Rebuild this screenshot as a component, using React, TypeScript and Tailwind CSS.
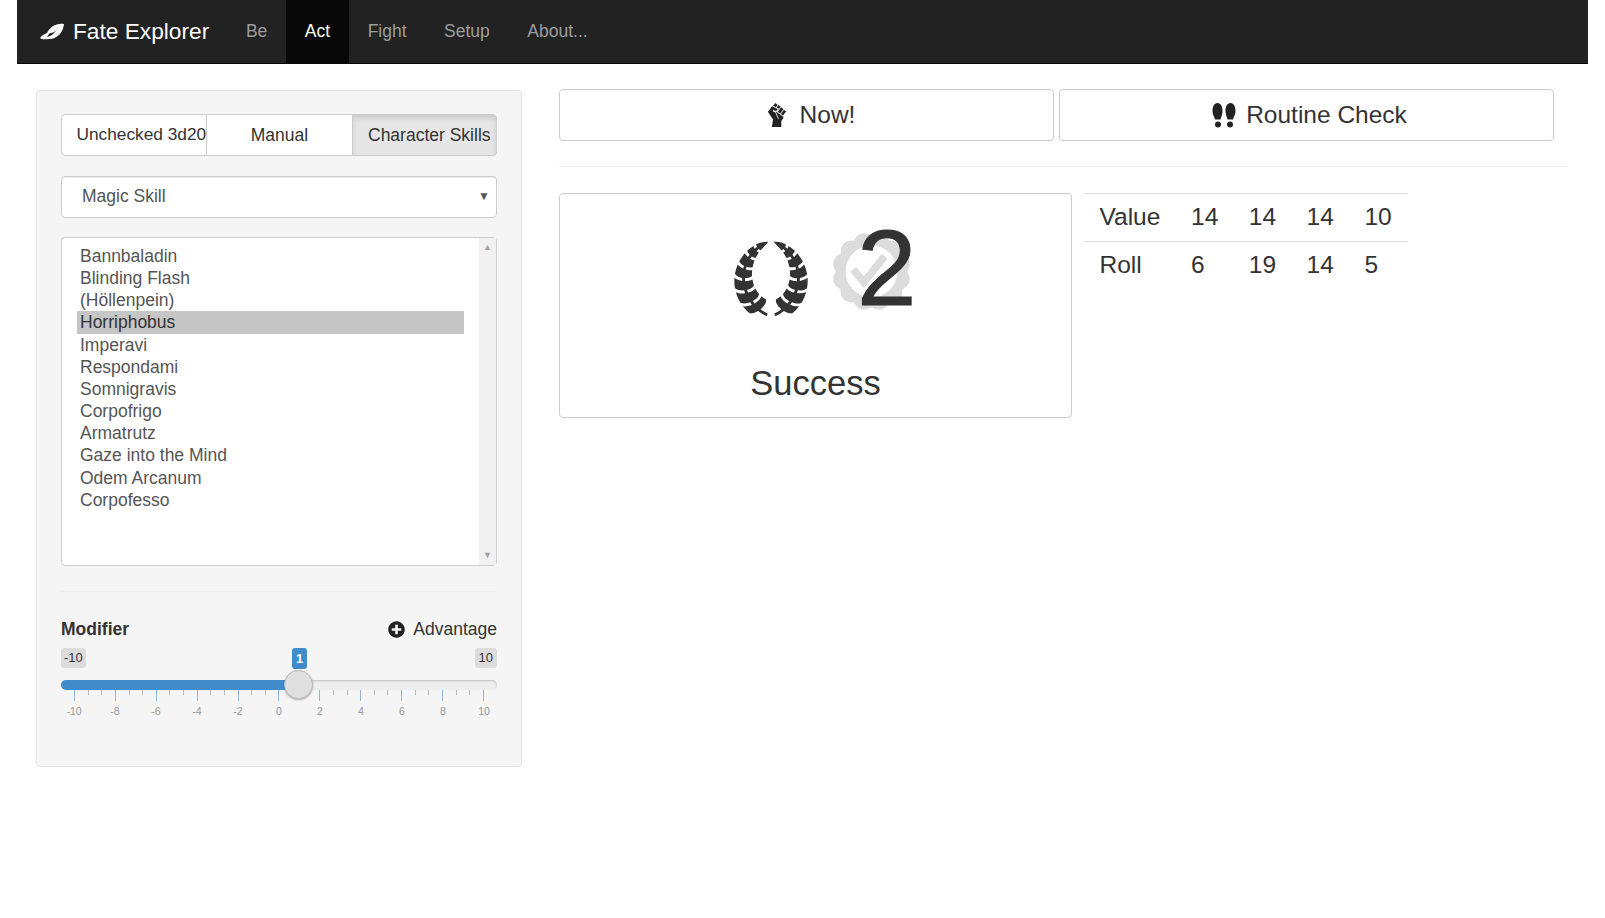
import { useState } from "react";
import { FaPlusCircle } from "react-icons/fa";
import { GiFist, GiLaurels } from "react-icons/gi";

const navItems = ["Be", "Act", "Fight", "Setup", "About..."];
const modes = ["Unchecked 3d20", "Manual", "Character Skills"];
const spells = [
  "Bannbaladin",
  "Blinding Flash",
  "(Höllenpein)",
  "Horriphobus",
  "Imperavi",
  "Respondami",
  "Somnigravis",
  "Corpofrigo",
  "Armatrutz",
  "Gaze into the Mind",
  "Odem Arcanum",
  "Corpofesso",
];
const tickLabels = ["-10", "-8", "-6", "-4", "-2", "0", "2", "4", "6", "8", "10"];

// scalloped outline for the grey badge behind the number
const badgePath = () => {
  const bumps = 12;
  let d = "";
  for (let i = 0; i < bumps; i++) {
    const a = (i / bumps) * Math.PI * 2;
    const b = ((i + 0.5) / bumps) * Math.PI * 2;
    const c = ((i + 1) / bumps) * Math.PI * 2;
    const start = `${37.5 + 33 * Math.cos(a)} ${37.5 + 33 * Math.sin(a)}`;
    const ctrl = `${37.5 + 41 * Math.cos(b)} ${37.5 + 41 * Math.sin(b)}`;
    const end = `${37.5 + 33 * Math.cos(c)} ${37.5 + 33 * Math.sin(c)}`;
    d += `${i === 0 ? `M${start}` : ""} Q${ctrl} ${end} `;
  }
  return d + "Z";
};

const App = () => {
  const [selected] = useState("Horriphobus");

  return (
    <div className="min-h-[918px] bg-white px-[17px] font-['Liberation_Sans',Arial,sans-serif] text-[17.5px] text-[#333]">
      <nav className="flex h-[64px] items-stretch border-b border-[#080808] bg-[#222]">
        <div className="flex items-center gap-[9px] pl-[23px] pr-[18px] text-[22.7px] text-white">
          <svg width="24" height="17" viewBox="0 0 24 17" fill="white">
            <path d="M0 15 C2 12 5 11 7 10 C10 4 16 0 24 1 C23 9 18 16 9 16 C5 16 2 17 0 15 Z" />
            <path d="M7 14 C12 13 16 9 18 4 C17 8 13 10 10 10 C9 11 8 12 7 14 Z" fill="#222" />
          </svg>
          Fate Explorer
        </div>
        {navItems.map((item) => (
          <div
            key={item}
            className={`flex items-center px-[18.75px] ${item === "Act" ? "bg-[#080808] text-white" : "text-[#9d9d9d]"}`}
          >
            {item}
          </div>
        ))}
      </nav>

      <div className="flex">
        <aside className="mt-[26px] ml-[19px] box-border h-[677px] w-[486px] shrink-0 rounded border border-[#e3e3e3] bg-[#f5f5f5] px-[24px] pt-[23px]">
          <div className="grid h-[42px] grid-cols-[146px_146px_1fr]">
            {modes.map((mode, i) => (
              <div
                key={mode}
                className={`flex items-center overflow-hidden border border-[#ccc] whitespace-nowrap ${
                  i === 0 ? "rounded-l pl-[14.5px] text-[17.3px]" : "-ml-px"
                } ${i === 1 ? "justify-center" : ""} ${
                  i === 2
                    ? "rounded-r border-[#adadad] bg-[#e6e6e6] pl-[15px] shadow-[inset_0_3px_5px_rgba(0,0,0,0.125)]"
                    : "bg-white"
                }`}
              >
                {mode}
              </div>
            ))}
          </div>

          <div className="mt-[20px] flex h-[42px] items-center justify-between rounded border border-[#ccc] bg-white pr-[6px] pb-[2px] pl-[20px] text-[#555] shadow-[inset_0_1px_1px_rgba(0,0,0,0.075)]">
            Magic Skill
            <span className="text-[12px]">▼</span>
          </div>

          <div className="mt-[19px] flex h-[329px] rounded border border-[#ccc] bg-white text-[#555]">
            <ul className="flex-1 pt-[7px] pr-[15px] pl-[15px] leading-[22.15px]">
              {spells.map((spell) => (
                <li
                  key={spell}
                  className={`pl-[3px] ${spell === selected ? "bg-[#c6c6c6] text-[#333]" : ""}`}
                >
                  {spell}
                </li>
              ))}
            </ul>
            <div className="flex w-[17px] flex-col items-center justify-between bg-[#f1f1f1] py-[3px] text-[9px] text-[#a3a3a3]">
              <span>▲</span>
              <span>▼</span>
            </div>
          </div>

          <hr className="mt-[25px] border-[#eee]" />

          <div className="mt-[24px] flex items-center justify-between">
            <span className="font-bold">Modifier</span>
            <span className="flex items-center gap-[8px]">
              <FaPlusCircle size={17} className="text-[#222]" />
              Advantage
            </span>
          </div>

          <div className="relative mt-[6px] h-[76px]">
            <span className="absolute top-0 left-0 rounded-[3px] bg-[#dcdcdc] px-[3px] text-[13px] leading-[20px]">-10</span>
            <span className="absolute top-0 right-0 rounded-[3px] bg-[#dcdcdc] px-[4px] text-[13px] leading-[20px]">10</span>
            <span className="absolute top-0 left-[231px] rounded-[3px] bg-[#428bca] px-[4px] text-[13px] leading-[21px] font-bold text-white">1</span>
            <div className="absolute top-[32px] right-0 left-0 h-[10px] rounded-full bg-[#eee] shadow-[inset_0_1px_2px_rgba(0,0,0,0.2)]" />
            <div className="absolute top-[32px] left-0 h-[10px] w-[240px] rounded-l-full bg-[#428bca]" />
            <div className="absolute top-[42px] right-[13px] left-[13px] flex justify-between">
              {Array.from({ length: 31 }, (_, i) => (
                <span
                  key={i}
                  className={`w-px ${i % 3 === 0 ? "h-[11px] bg-[#8db6d8]" : "h-[5px] bg-[#bbb]"}`}
                />
              ))}
            </div>
            <div className="absolute top-[22px] left-[223px] h-[29px] w-[29px] rounded-full border border-[#bbb] bg-[#dfdfdf] shadow-[0_1px_2px_rgba(0,0,0,0.3)]" />
            <div className="absolute top-[56px] right-[5px] left-[5px] flex justify-between text-[10.5px] text-[#999]">
              {tickLabels.map((label) => (
                <span key={label} className="w-[16px] text-center">
                  {label}
                </span>
              ))}
            </div>
          </div>
        </aside>

        <main className="mt-[25px] ml-[37px] flex-1 pr-[20px]">
          <div className="flex gap-[5px] pr-[14px]">
            <div className="flex h-[52px] flex-1 items-center justify-center gap-[10px] rounded border border-[#ccc] pl-[6px] text-[24.5px]">
              <GiFist size={26} className="text-[#222]" />
              Now!
            </div>
            <div className="flex h-[52px] flex-1 items-center justify-center gap-[10px] rounded border border-[#ccc] pl-[6px] text-[24.5px]">
              <svg width="24" height="25" viewBox="0 0 24 25" fill="#222">
                <path d="M5.500 0 C9 0 10.500 4 10.500 8 C10.500 12 9 14 8.500 16.500 L3 16.500 C2.500 14 0.500 12 0.500 8 C0.500 4 2 0 5.500 0 Z" />
                <circle cx="6" cy="21.500" r="3" />
                <path d="M18.500 0 C15 0 13.500 4 13.500 8 C13.500 12 15 14 15.500 16.500 L21 16.500 C21.500 14 23.500 12 23.500 8 C23.500 4 22 0 18.500 0 Z" />
                <circle cx="18" cy="21.500" r="3" />
              </svg>
              Routine Check
            </div>
          </div>

          <hr className="mt-[25px] border-[#eee]" />

          <div className="mt-[26px] flex items-start gap-3">
            <div className="flex h-[225px] w-[513px] flex-col items-center rounded border border-[#ccc]">
              <div className="mt-[37px] flex h-[85px] items-start gap-[20px] pl-[10px]">
                <GiLaurels size={80} className="mt-[8px] text-[#333]" />
                <div className="relative h-[79px] w-[79px]">
                  <svg width="81" height="81" viewBox="0 0 75 75" className="absolute top-0 left-0">
                    <path d={badgePath()} fill="#dcdcdc" />
                    <circle cx="37.500" cy="37.500" r="24" fill="white" />
                    <path d="M20.500 35.500 L30.500 47.500 L49.500 23.500" fill="none" stroke="#dcdcdc" strokeWidth="7" />
                  </svg>
                  <span className="absolute top-[-16px] left-[26px] text-[107px] leading-[107px] [-webkit-text-stroke:1px_#333]">2</span>
                </div>
              </div>
              <div className="mt-[42px] text-[34.5px]">Success</div>
            </div>

            <table className="table-fixed border-t border-[#ddd] text-[24.5px]">
              <tbody>
                <tr className="h-[48px]">
                  <td className="w-[107px] pl-[15.5px]">Value</td>
                  <td className="w-[57.8px]">14</td>
                  <td className="w-[57.8px]">14</td>
                  <td className="w-[57.8px]">14</td>
                  <td className="w-[43.5px]">10</td>
                </tr>
                <tr className="h-[48px] border-t border-[#ddd]">
                  <td className="pl-[15.5px]">Roll</td>
                  <td>6</td>
                  <td>19</td>
                  <td>14</td>
                  <td>5</td>
                </tr>
              </tbody>
            </table>
          </div>
        </main>
      </div>
    </div>
  );
};

export default App;
